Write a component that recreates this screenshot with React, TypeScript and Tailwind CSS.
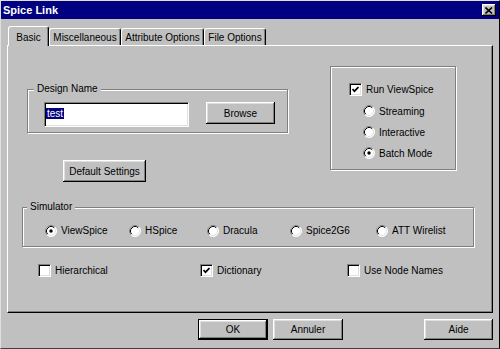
import type { ReactNode } from 'react';

const raised =
  'bg-[#c0c0c0] shadow-[inset_-1px_-1px_#000,inset_1px_1px_#fff,inset_-2px_-2px_#808080,inset_2px_2px_#dfdfdf]';

function Button({ label, className = '' }: { label: string; className?: string }) {
  return (
    <div className={`flex items-center justify-center ${raised} ${className}`}>
      <span>{label}</span>
    </div>
  );
}

function Radio({ checked = false }: { checked?: boolean }) {
  return (
    <svg width="12" height="12" viewBox="0 0 12 12" className="shrink-0">
      <circle cx="6" cy="6" r="5.5" fill="#fff" />
      <path d="M2.11 9.89 A5.5 5.5 0 0 1 9.89 2.11" fill="none" stroke="#808080" strokeWidth="1" />
      <path d="M2.82 9.18 A4.5 4.5 0 0 1 9.18 2.82" fill="none" stroke="#000" strokeWidth="1" />
      <path d="M9.89 2.11 A5.5 5.5 0 0 1 2.11 9.89" fill="none" stroke="#fff" strokeWidth="1" />
      <path d="M9.18 2.82 A4.5 4.5 0 0 1 2.82 9.18" fill="none" stroke="#dfdfdf" strokeWidth="1" />
      {checked && <circle cx="6" cy="6" r="1.7" fill="#000" />}
    </svg>
  );
}

function Check({ checked = false }: { checked?: boolean }) {
  return (
    <div className="w-[13px] h-[13px] shrink-0 bg-white border-t border-l border-[#808080] border-r-white border-b-white border-r border-b shadow-[inset_1px_1px_#000,inset_-1px_-1px_#dfdfdf] flex items-center justify-center">
      {checked && (
        <svg width="7" height="7" viewBox="0 0 7 7">
          <path d="M0.5 3 L2.5 5.2 L6.5 1" fill="none" stroke="#000" strokeWidth="1.7" />
        </svg>
      )}
    </div>
  );
}

function Group({
  label,
  className = '',
  labelClass = '',
  children,
}: {
  label: string;
  className?: string;
  labelClass?: string;
  children: ReactNode;
}) {
  return (
    <div
      className={`relative border border-[#808080] shadow-[inset_1px_1px_#fff,1px_1px_#fff] ${className}`}
    >
      <span className={`absolute -top-[7px] bg-[#c0c0c0] px-[3px] leading-[12px] ${labelClass}`}>
        {label}
      </span>
      {children}
    </div>
  );
}

function Tab({ label, active = false, width }: { label: string; active?: boolean; width: string }) {
  return (
    <div
      className={`${width} flex items-center justify-center bg-[#c0c0c0] border-t border-l border-white border-r border-r-black rounded-t-[3px] shadow-[inset_-1px_0_#808080] ${
        active ? 'h-[20px] -mb-px relative z-10 pt-[1px]' : 'h-[17px]'
      }`}
    >
      {label}
    </div>
  );
}

export default function App() {
  return (
    <div className="w-[500px] h-[349px] bg-[#c0c0c0] border-t border-l border-[#dfdfdf] border-r border-b border-r-black border-b-[#404040] font-['Liberation_Sans',Arial,sans-serif] text-[10px] text-black overflow-hidden">
      {/* title bar */}
      <div className="h-[18px] bg-[#000080] flex items-center justify-between pl-[2px] pr-[3px]">
        <span className="text-white font-bold text-[11px]">Spice Link</span>
        <div className={`w-[14px] h-[12px] flex items-center justify-center ${raised}`}>
          <svg width="8" height="7" viewBox="0 0 8 7">
            <path d="M0.5 0.5 L7 6.5 M7 0.5 L0.5 6.5" stroke="#000" strokeWidth="1.6" />
          </svg>
        </div>
      </div>

      {/* tabs */}
      <div className="flex items-end h-[19px] mt-[7px] ml-[7px]">
        <Tab label="Basic" active width="w-[41px]" />
        <Tab label="Miscellaneous" width="w-[72px]" />
        <Tab label="Attribute Options" width="w-[83px]" />
        <Tab label="File Options" width="w-[62px]" />
      </div>

      {/* panel */}
      <div className="ml-[6px] w-[486px] h-[268px] border-t border-l border-white border-r border-b border-r-black border-b-black shadow-[inset_-1px_-1px_#808080] flex flex-col">
        <div className="flex items-start">
          <div className="ml-[19px] mt-[43px] flex flex-col">
            <Group label="Design Name" className="w-[261px] h-[44px]" labelClass="left-[6px]">
              <div className="flex items-start pl-[16px] pt-[12px]">
                <div className="w-[145px] h-[25px] bg-white border-t border-l border-[#808080] border-r border-b border-r-white border-b-white shadow-[inset_1px_1px_#000,inset_-1px_-1px_#dfdfdf] pl-[1px] pt-[3px]">
                  <span className="bg-[#000080] text-white px-[1px] leading-[11px] inline-block">test</span>
                </div>
                <Button label="Browse" className="ml-[17px] w-[69px] h-[22px]" />
              </div>
            </Group>
            <Button label="Default Settings" className="ml-[36px] mt-[27px] w-[83px] h-[22px]" />
          </div>

          <div className="ml-[42px] mt-[20px] w-[126px] h-[104px] border border-[#808080] shadow-[inset_1px_1px_#fff,1px_1px_#fff] flex flex-col pl-[18px] pt-[15px]">
            <div className="flex items-center gap-[4px]">
              <Check checked />
              <span>Run ViewSpice</span>
            </div>
            <div className="flex flex-col ml-[14px] mt-[8px] gap-[9px]">
              <div className="flex items-center gap-[4px] h-[12px]">
                <Radio />
                <span>Streaming</span>
              </div>
              <div className="flex items-center gap-[4px] h-[12px]">
                <Radio />
                <span>Interactive</span>
              </div>
              <div className="flex items-center gap-[4px] h-[12px]">
                <Radio checked />
                <span>Batch Mode</span>
              </div>
            </div>
          </div>
        </div>

        <Group label="Simulator" className="ml-[14px] mt-[25px] w-[452px] h-[40px]" labelClass="left-[4px]">
          <div className="flex items-center pl-[22px] pt-[15px]">
            <div className="w-[84px] flex items-center gap-[4px]">
              <Radio checked />
              <span>ViewSpice</span>
            </div>
            <div className="w-[78px] flex items-center gap-[4px]">
              <Radio />
              <span>HSpice</span>
            </div>
            <div className="w-[83px] flex items-center gap-[4px]">
              <Radio />
              <span>Dracula</span>
            </div>
            <div className="w-[86px] flex items-center gap-[4px]">
              <Radio />
              <span>Spice2G6</span>
            </div>
            <div className="flex items-center gap-[4px]">
              <Radio />
              <span>ATT Wirelist</span>
            </div>
          </div>
        </Group>

        <div className="flex items-center ml-[30px] mt-[16px]">
          <div className="w-[162px] flex items-center gap-[4px]">
            <Check />
            <span>Hierarchical</span>
          </div>
          <div className="w-[147px] flex items-center gap-[4px]">
            <Check checked />
            <span>Dictionary</span>
          </div>
          <div className="flex items-center gap-[4px]">
            <Check />
            <span>Use Node Names</span>
          </div>
        </div>
      </div>

      {/* bottom buttons */}
      <div className="flex items-start mt-[6px] ml-[197px]">
        <Button label="OK" className="w-[70px] h-[21px] border border-black" />
        <Button label="Annuler" className="ml-[5px] w-[70px] h-[21px]" />
        <Button label="Aide" className="ml-[81px] w-[69px] h-[21px]" />
      </div>
    </div>
  );
}
